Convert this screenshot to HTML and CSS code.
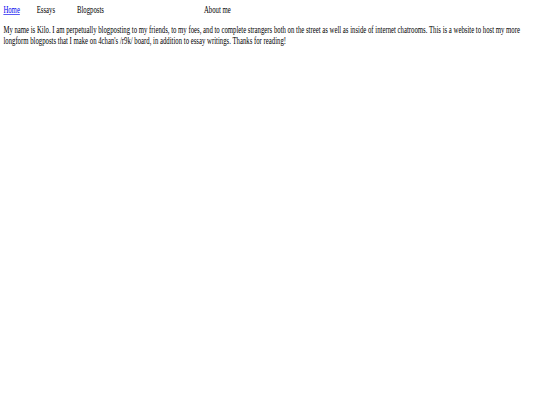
FILE: index.html
```html
<!DOCTYPE html>
<html>
<head>
<meta charset="utf-8">
<link rel="stylesheet" href="styles.css">
</head>
<body>
<div class="frame">
  <div class="page">
    <nav class="nav">
      <a class="nav-link current" href="#">Home</a>
      <a class="nav-link" href="#">Essays</a>
      <a class="nav-link" href="#">Blogposts</a>
      <a class="nav-link" href="#">About me</a>
    </nav>
    <p class="intro">My name is Kilo. I am perpetually blogposting to my friends, to my foes, and to complete strangers both on the street as well as inside of internet chatrooms. This is a website to host my more longform blogposts that I make on 4chan's /r9k/ board, in addition to essay writings. Thanks for reading!</p>
  </div>
</div>
</body>
</html>
```
FILE: styles.css
```css
html, body {
  margin: 0;
  padding: 0;
  background: #fff;
  overflow: hidden;
}
.frame {
  width: 540px;
  height: 405px;
  overflow: hidden;
}
.page {
  width: 1264px;
  padding: 6.5px 8px 8px;
  transform: scale(0.421875, 0.64);
  transform-origin: 0 0;
  font-family: "Liberation Serif", "Times New Roman", serif;
  font-size: 16px;
  line-height: 17.2px;
  color: #000;
}
.nav {
  display: grid;
  grid-template-columns: 79px 95.5px 301px auto;
}
.nav-link {
  color: #000;
  text-decoration: none;
}
.nav-link.current {
  color: #0000ee;
  text-decoration: underline;
}
.intro {
  margin: 14px 0 0;
}
```
